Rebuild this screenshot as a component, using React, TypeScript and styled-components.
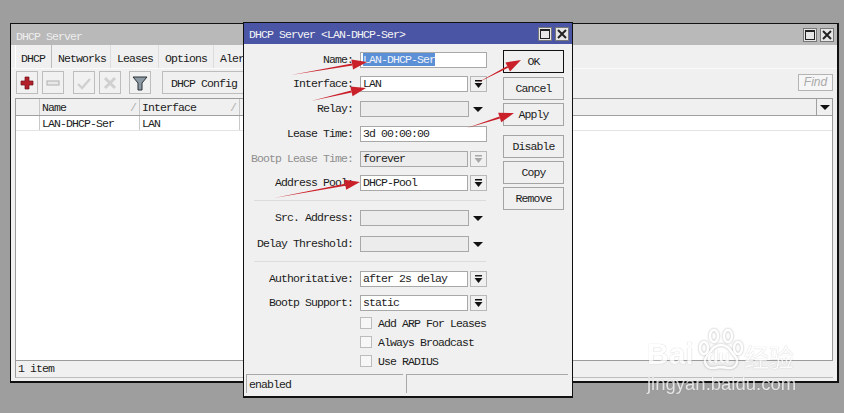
import React from "react";
import styled, { createGlobalStyle } from "styled-components";

const Global = createGlobalStyle`
  html, body { margin: 0; padding: 0; background: #9e9e9e; }
  body { font-family: "Liberation Mono", "DejaVu Sans Mono", monospace; font-size: 11.5px; letter-spacing: -0.9px; color: #1c1c1c; }
`;

const Desktop = styled.div`
  position: relative;
  width: 844px;
  height: 413px;
  overflow: hidden;
  background: #9e9e9e;
`;

const MainWindow = styled.div`
  position: absolute;
  left: 10px;
  top: 23px;
  width: 829px;
  height: 360px;
  box-sizing: border-box;
  border: 1px solid #111;
  border-bottom-width: 2px;
  border-right-width: 2px;
  background: #f0f0f0;
  display: flex;
  flex-direction: column;
`;

const TitleBar = styled.div<{ $active?: boolean }>`
  height: 21px;
  flex: none;
  display: flex;
  align-items: center;
  justify-content: space-between;
  padding: 0 3px 0 5px;
  background: ${(p) => (p.$active ? "#4a55a6" : "#b9b9b9")};
  color: ${(p) => (p.$active ? "#f4f4f4" : "#eeeeee")};
`;

const TitleText = styled.span<{ $drop: number }>`
  padding-top: ${(p) => p.$drop}px;
`;

const WinButtons = styled.div`
  display: flex;
  gap: 3px;
`;

const WinButton = styled.div`
  width: 14px;
  height: 14px;
  box-sizing: border-box;
  border: 1px solid #777;
  background: #e6e6e6;
  display: flex;
  align-items: center;
  justify-content: center;
`;

const Tabs = styled.div`
  height: 23px;
  flex: none;
  display: flex;
  align-items: stretch;
  padding-left: 4px;
  border-bottom: 1px solid #fafafa;
  overflow: hidden;
`;

const Tab = styled.div<{ $active?: boolean; $w: number }>`
  width: ${(p) => p.$w}px;
  flex: none;
  display: flex;
  align-items: center;
  padding-top: 4px;
  padding-left: ${(p) => (p.$active ? 5 : 6)}px;
  box-sizing: border-box;
  border-right: 1px solid ${(p) => (p.$active ? "#bdbdbd" : "#dddddd")};
  ${(p) => (p.$active ? "border-left: 1px solid #fff;" : "")}
`;

const Toolbar = styled.div`
  height: 23px;
  margin-top: 2px;
  flex: none;
  display: flex;
  align-items: stretch;
  padding: 0 5px;
`;

const ToolButton = styled.div<{ $after?: number }>`
  width: 22px;
  flex: none;
  box-sizing: border-box;
  margin-right: ${(p) => p.$after ?? 4}px;
  border: 1px solid #bdbdbd;
  background: #f1f1f1;
  display: flex;
  align-items: center;
  justify-content: center;
`;

const ConfigButton = styled.div`
  width: 120px;
  flex: none;
  box-sizing: border-box;
  border: 1px solid #bdbdbd;
  padding: 1px 0 0 8px;
  display: flex;
  align-items: center;
`;

const FindBox = styled.div`
  margin-left: auto;
  margin-right: -1px;
  margin-top: 3px;
  width: 35px;
  height: 17px;
  box-sizing: border-box;
  border: 1px solid #b4b4b4;
  background: #f6f6f6;
  color: #aaa;
  font-family: "Liberation Sans", sans-serif;
  font-style: italic;
  font-size: 12px;
  letter-spacing: 0;
  text-align: center;
  line-height: 15px;
`;

const TablePane = styled.div`
  flex: 1;
  margin: 4px 4px 0 4px;
  min-height: 0;
  display: flex;
  flex-direction: column;
  border: 1px solid #9c9c9c;
  border-bottom: none;
  background: #fff;
`;

const HeaderRow = styled.div`
  height: 16px;
  flex: none;
  display: flex;
  background: #f0f0f0;
  border-bottom: 1px solid #a0a0a0;
`;

const Cell = styled.div<{ $w: number }>`
  width: ${(p) => p.$w}px;
  flex: none;
  box-sizing: border-box;
  padding-left: 2px;
  border-right: 1px solid #c8c8c8;
  display: flex;
  align-items: center;
  justify-content: space-between;
`;

const SortMark = styled.span`
  color: #b0b0b0;
  padding-right: 3px;
`;

const HeaderFill = styled.div`
  flex: 1;
`;

const HeaderMenu = styled.div`
  width: 15px;
  flex: none;
  border-left: 1px solid #a0a0a0;
  display: flex;
  align-items: center;
  justify-content: center;
`;

const Caret = styled.i`
  display: block;
  width: 0;
  height: 0;
  border-left: 5px solid transparent;
  border-right: 5px solid transparent;
  border-top: 5px solid #111;
`;

const DataRow = styled.div`
  height: 14px;
  flex: none;
  display: flex;
  border-bottom: 1px solid #e4e4e4;
`;

const ItemBar = styled.div`
  height: 18px;
  flex: none;
  margin: 0 4px 3px 4px;
  box-sizing: border-box;
  border-top: 1px solid #9c9c9c;
  border-left: 1px solid #9c9c9c;
  border-bottom: 1px solid #bdbdbd;
  padding: 0 0 1px 2px;
  display: flex;
  align-items: center;
`;

const Dialog = styled.div`
  position: absolute;
  left: 243px;
  top: 22px;
  width: 330px;
  height: 376px;
  box-sizing: border-box;
  border: 1px solid #111;
  border-bottom-width: 2px;
  background: #f0f0f0;
  display: flex;
  flex-direction: column;
`;

const DialogBody = styled.div`
  flex: 1;
  display: flex;
  min-height: 0;
`;

const Form = styled.div`
  width: 243px;
  flex: none;
  padding-top: 8px;
  box-sizing: border-box;
`;

const Row = styled.div<{ $top?: number }>`
  height: 16px;
  margin-top: ${(p) => p.$top ?? 0}px;
  display: flex;
  align-items: stretch;
`;

const Label = styled.div<{ $muted?: boolean }>`
  width: 116px;
  flex: none;
  box-sizing: border-box;
  padding-right: 7px;
  text-align: right;
  line-height: 16px;
  white-space: nowrap;
  color: ${(p) => (p.$muted ? "#8f8f8f" : "#1c1c1c")};
`;

const Field = styled.div<{ $w: number; $disabled?: boolean }>`
  width: ${(p) => p.$w}px;
  flex: none;
  box-sizing: border-box;
  border: 1px solid #a8a8a8;
  background: ${(p) => (p.$disabled ? "#ececec" : "#fff")};
  padding-left: 2px;
  line-height: 14px;
  white-space: nowrap;
`;

const Selected = styled.span`
  background: #5b8fd6;
  color: #eef3fb;
`;

const DropButton = styled.div<{ $muted?: boolean }>`
  width: 17px;
  margin-left: 2px;
  flex: none;
  box-sizing: border-box;
  border: 1px solid #b8b8b8;
  display: flex;
  align-items: center;
  justify-content: center;
  color: ${(p) => (p.$muted ? "#a8a8a8" : "#111")};
`;

const BareCaret = styled.div`
  width: 18px;
  flex: none;
  display: flex;
  align-items: center;
  justify-content: center;
`;

const Separator = styled.div`
  height: 1px;
  margin: 9px 0 9px 10px;
  width: 232px;
  background: #dcdcdc;
`;

const CheckRow = styled.div<{ $top?: number }>`
  height: 12px;
  margin-top: ${(p) => p.$top ?? 0}px;
  margin-left: 116px;
  display: flex;
  align-items: center;
  gap: 6px;
  white-space: nowrap;
`;

const CheckBox = styled.i`
  display: block;
  width: 12px;
  height: 12px;
  box-sizing: border-box;
  border: 1px solid #bcbcbc;
  background: #f7f7f7;
`;

const Side = styled.div`
  width: 61px;
  margin-left: 16px;
  padding-top: 5px;
  display: flex;
  flex-direction: column;
  flex: none;
`;

const ActionButton = styled.div<{ $top?: number; $primary?: boolean }>`
  height: 23px;
  margin-top: ${(p) => p.$top ?? 3}px;
  box-sizing: border-box;
  border: 1px solid ${(p) => (p.$primary ? "#111" : "#a4a4a4")};
  display: flex;
  align-items: center;
  justify-content: center;
`;

const StatusBar = styled.div`
  height: 19px;
  flex: none;
  margin: 0 4px 3px 2px;
  display: flex;
  gap: 3px;
`;

const StatusCell = styled.div<{ $w?: number }>`
  ${(p) => (p.$w ? `width: ${p.$w}px; flex: none;` : "flex: 1;")}
  box-sizing: border-box;
  border-top: 1px solid #a8a8a8;
  border-left: 1px solid #a8a8a8;
  padding-left: 2px;
  line-height: 19px;
`;

const Overlay = styled.svg`
  position: absolute;
  left: 0;
  top: 0;
  pointer-events: none;
`;

const Watermark = styled.div`
  position: absolute;
  left: 647px;
  top: 328px;
  width: 150px;
  height: 66px;
  color: #fff;
  opacity: 0.75;
  text-shadow: 0 0 1px rgba(90, 90, 90, 0.55);
  font-family: "Liberation Sans", sans-serif;
  letter-spacing: 0;
  pointer-events: none;
`;

const WmTop = styled.div`
  display: flex;
  align-items: flex-end;
  height: 42px;
`;

const WmBai = styled.span`
  font-size: 30px;
  font-weight: 700;
  line-height: 32px;
  width: 52px;
`;

const WmPaw = styled.div`
  position: relative;
  width: 44px;
  height: 42px;
  flex: none;
  margin-right: 1px;
  svg {
    filter: drop-shadow(0 0 1px rgba(90, 90, 90, 0.6));
  }
`;

const WmDu = styled.span`
  position: absolute;
  left: 8px;
  bottom: 3px;
  font-size: 19px;
  font-weight: 700;
  line-height: 20px;
`;

const WmCn = styled.span`
  font-family: "Noto Sans CJK SC", sans-serif;
  font-size: 25px;
  line-height: 28px;
  white-space: nowrap;
`;

const WmUrl = styled.div`
  font-size: 18.5px;
  line-height: 22px;
  margin-top: 3px;
  white-space: nowrap;
`;

const MaxIcon = () => (
  <svg width="10" height="10" viewBox="0 0 10 10">
    <rect x="0.5" y="0.5" width="9" height="9" fill="none" stroke="#222" />
    <rect x="0" y="0" width="10" height="2" fill="#222" />
  </svg>
);
const CloseIcon = () => (
  <svg width="10" height="10" viewBox="0 0 10 10">
    <path d="M1 1L9 9M9 1L1 9" stroke="#222" strokeWidth="2" />
  </svg>
);
const DropIcon = () => (
  <svg width="9" height="9" viewBox="0 0 9 9">
    <rect x="1" y="0" width="7" height="1.5" fill="currentColor" />
    <path d="M0.5 3H8.5L4.5 8Z" fill="currentColor" />
  </svg>
);

const Arrow = ({ x1, y1, x2, y2 }: { x1: number; y1: number; x2: number; y2: number }) => {
  const a = Math.atan2(y2 - y1, x2 - x1);
  const bx = x2 - 15 * Math.cos(a);
  const by = y2 - 15 * Math.sin(a);
  const nx = -Math.sin(a);
  const ny = Math.cos(a);
  return (
    <g fill="#c9202a">
      <polygon points={`${x1},${y1} ${bx + nx},${by + ny} ${bx - nx},${by - ny}`} />
      <polygon points={`${x2},${y2} ${bx + 5 * nx},${by + 5 * ny} ${bx - 5 * nx},${by - 5 * ny}`} />
    </g>
  );
};

const Row2 = ({ label, value, top, muted }: { label: string; value: string; top?: number; muted?: boolean }) => (
  <Row $top={top}>
    <Label $muted={muted}>{label}</Label>
    <Field $w={108} $disabled={muted}>{value}</Field>
    <DropButton $muted={muted}><DropIcon /></DropButton>
  </Row>
);

const RowEmpty = ({ label, top }: { label: string; top?: number }) => (
  <Row $top={top}>
    <Label>{label}</Label>
    <Field $w={109} $disabled />
    <BareCaret><Caret /></BareCaret>
  </Row>
);

export default function App() {
  return (
    <Desktop>
      <Global />
      <MainWindow>
        <TitleBar>
          <TitleText $drop={3}>DHCP Server</TitleText>
          <WinButtons>
            <WinButton><MaxIcon /></WinButton>
            <WinButton><CloseIcon /></WinButton>
          </WinButtons>
        </TitleBar>
        <Tabs>
          <Tab $active $w={37}>DHCP</Tab>
          <Tab $w={59}>Networks</Tab>
          <Tab $w={48}>Leases</Tab>
          <Tab $w={55}>Options</Tab>
          <Tab $w={40}>Alerts</Tab>
        </Tabs>
        <Toolbar>
          <ToolButton>
            <svg width="14" height="14" viewBox="0 0 14 14">
              <path d="M5 1H9V5H13V9H9V13H5V9H1V5H5Z" fill="#b3202a" stroke="#6d1118" strokeWidth="0.7" />
            </svg>
          </ToolButton>
          <ToolButton $after={9}>
            <svg width="14" height="6" viewBox="0 0 14 6">
              <rect x="1" y="1" width="12" height="4" fill="#e8e8e8" stroke="#b0b0b0" />
            </svg>
          </ToolButton>
          <ToolButton>
            <svg width="14" height="14" viewBox="0 0 14 14">
              <path d="M1 8L5 12L13 3" fill="none" stroke="#d0d0d0" strokeWidth="2.4" />
            </svg>
          </ToolButton>
          <ToolButton $after={8}>
            <svg width="14" height="14" viewBox="0 0 14 14">
              <path d="M2 2L12 12M12 2L2 12" fill="none" stroke="#d0d0d0" strokeWidth="3" />
            </svg>
          </ToolButton>
          <ToolButton $after={11}>
            <svg width="16" height="16" viewBox="0 0 16 16">
              <path d="M1 2H15L10 8V15L6 15V8Z" fill="#8d9aa6" stroke="#2a3036" />
            </svg>
          </ToolButton>
          <ConfigButton>DHCP Config</ConfigButton>
          <FindBox>Find</FindBox>
        </Toolbar>
        <TablePane>
          <HeaderRow>
            <Cell $w={24} />
            <Cell $w={100}>Name<SortMark>/</SortMark></Cell>
            <Cell $w={100}>Interface<SortMark>/</SortMark></Cell>
            <HeaderFill />
            <HeaderMenu><Caret /></HeaderMenu>
          </HeaderRow>
          <DataRow>
            <Cell $w={24} />
            <Cell $w={100}>LAN-DHCP-Ser</Cell>
            <Cell $w={100}>LAN</Cell>
          </DataRow>
        </TablePane>
        <ItemBar>1 item</ItemBar>
      </MainWindow>

      <Dialog>
        <TitleBar $active>
          <TitleText $drop={2}>DHCP Server &lt;LAN-DHCP-Ser&gt;</TitleText>
          <WinButtons>
            <WinButton><MaxIcon /></WinButton>
            <WinButton><CloseIcon /></WinButton>
          </WinButtons>
        </TitleBar>
        <DialogBody>
          <Form>
            <Row>
              <Label>Name:</Label>
              <Field $w={127}><Selected>LAN-DHCP-Ser</Selected></Field>
            </Row>
            <Row2 label="Interface:" value="LAN" top={8} />
            <RowEmpty label="Relay:" top={9} />
            <Row $top={9}>
              <Label>Lease Time:</Label>
              <Field $w={127}>3d 00:00:00</Field>
            </Row>
            <Row2 label="Bootp Lease Time:" value="forever" top={9} muted />
            <Row2 label="Address Pool:" value="DHCP-Pool" top={8} />
            <Separator />
            <RowEmpty label="Src. Address:" />
            <RowEmpty label="Delay Threshold:" top={10} />
            <Separator />
            <Row2 label="Authoritative:" value="after 2s delay" />
            <Row2 label="Bootp Support:" value="static" top={8} />
            <CheckRow $top={6}><CheckBox />Add ARP For Leases</CheckRow>
            <CheckRow $top={7}><CheckBox />Always Broadcast</CheckRow>
            <CheckRow $top={7}><CheckBox />Use RADIUS</CheckRow>
          </Form>
          <Side>
            <ActionButton $top={1} $primary>OK</ActionButton>
            <ActionButton $top={4}>Cancel</ActionButton>
            <ActionButton>Apply</ActionButton>
            <ActionButton $top={9}>Disable</ActionButton>
            <ActionButton>Copy</ActionButton>
            <ActionButton>Remove</ActionButton>
          </Side>
        </DialogBody>
        <StatusBar>
          <StatusCell $w={157}>enabled</StatusCell>
          <StatusCell />
        </StatusBar>
      </Dialog>

      <Overlay width="844" height="413" viewBox="0 0 844 413">
        <Arrow x1={291} y1={75} x2={367} y2={62} />
        <Arrow x1={311} y1={101} x2={366} y2={88} />
        <Arrow x1={477} y1={83} x2={521} y2={60} />
        <Arrow x1={467} y1={128} x2={514} y2={113} />
        <Arrow x1={274} y1={198} x2={360} y2={182} />
      </Overlay>

      <Watermark>
        <WmTop>
          <WmBai>Bai</WmBai>
          <WmPaw>
            <svg width="44" height="42" viewBox="0 0 44 42">
              <g fill="none" stroke="#fff" strokeWidth="2.5">
                <ellipse cx="5" cy="20" rx="4" ry="6" />
                <ellipse cx="15" cy="8" rx="4" ry="6" />
                <ellipse cx="29" cy="8" rx="4" ry="6" />
                <ellipse cx="39" cy="20" rx="4" ry="6" />
                <path d="M22 17C14 17 12 24 8 28C3 34 8 41 15 40C19 39 25 39 29 40C36 41 41 34 36 28C32 24 30 17 22 17Z" />
              </g>
            </svg>
            <WmDu>du</WmDu>
          </WmPaw>
          <WmCn>经验</WmCn>
        </WmTop>
        <WmUrl>jingyan.baidu.com</WmUrl>
      </Watermark>
    </Desktop>
  );
}
